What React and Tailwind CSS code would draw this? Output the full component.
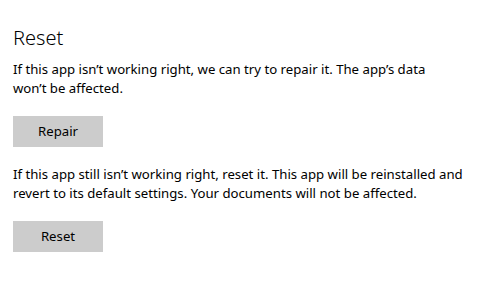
import React from 'react';

export default function App() {
    return (
        <div className="w-[486px] h-[289px] bg-white text-black pl-[13px] pt-[24px] font-['Noto_Sans',sans-serif]">
            <h2 className="text-[20px] leading-[28px] font-light">Reset</h2>

            <p className="mt-[8px] text-[13.2px] leading-[19px] max-w-[420px]">
                If this app isn’t working right, we can try to repair it. The app’s data won’t be affected.
            </p>
            <button className="mt-[18px] w-[90px] h-[31px] bg-[#cccccc] text-[13.2px] block">
                Repair
            </button>

            <p className="mt-[18px] text-[13.2px] leading-[19px] max-w-[460px]">
                If this app still isn’t working right, reset it. This app will be reinstalled and revert to its default settings. Your documents will not be affected.
            </p>
            <button className="mt-[18px] w-[90px] h-[31px] bg-[#cccccc] text-[13.2px] block">
                Reset
            </button>
        </div>
    );
}
